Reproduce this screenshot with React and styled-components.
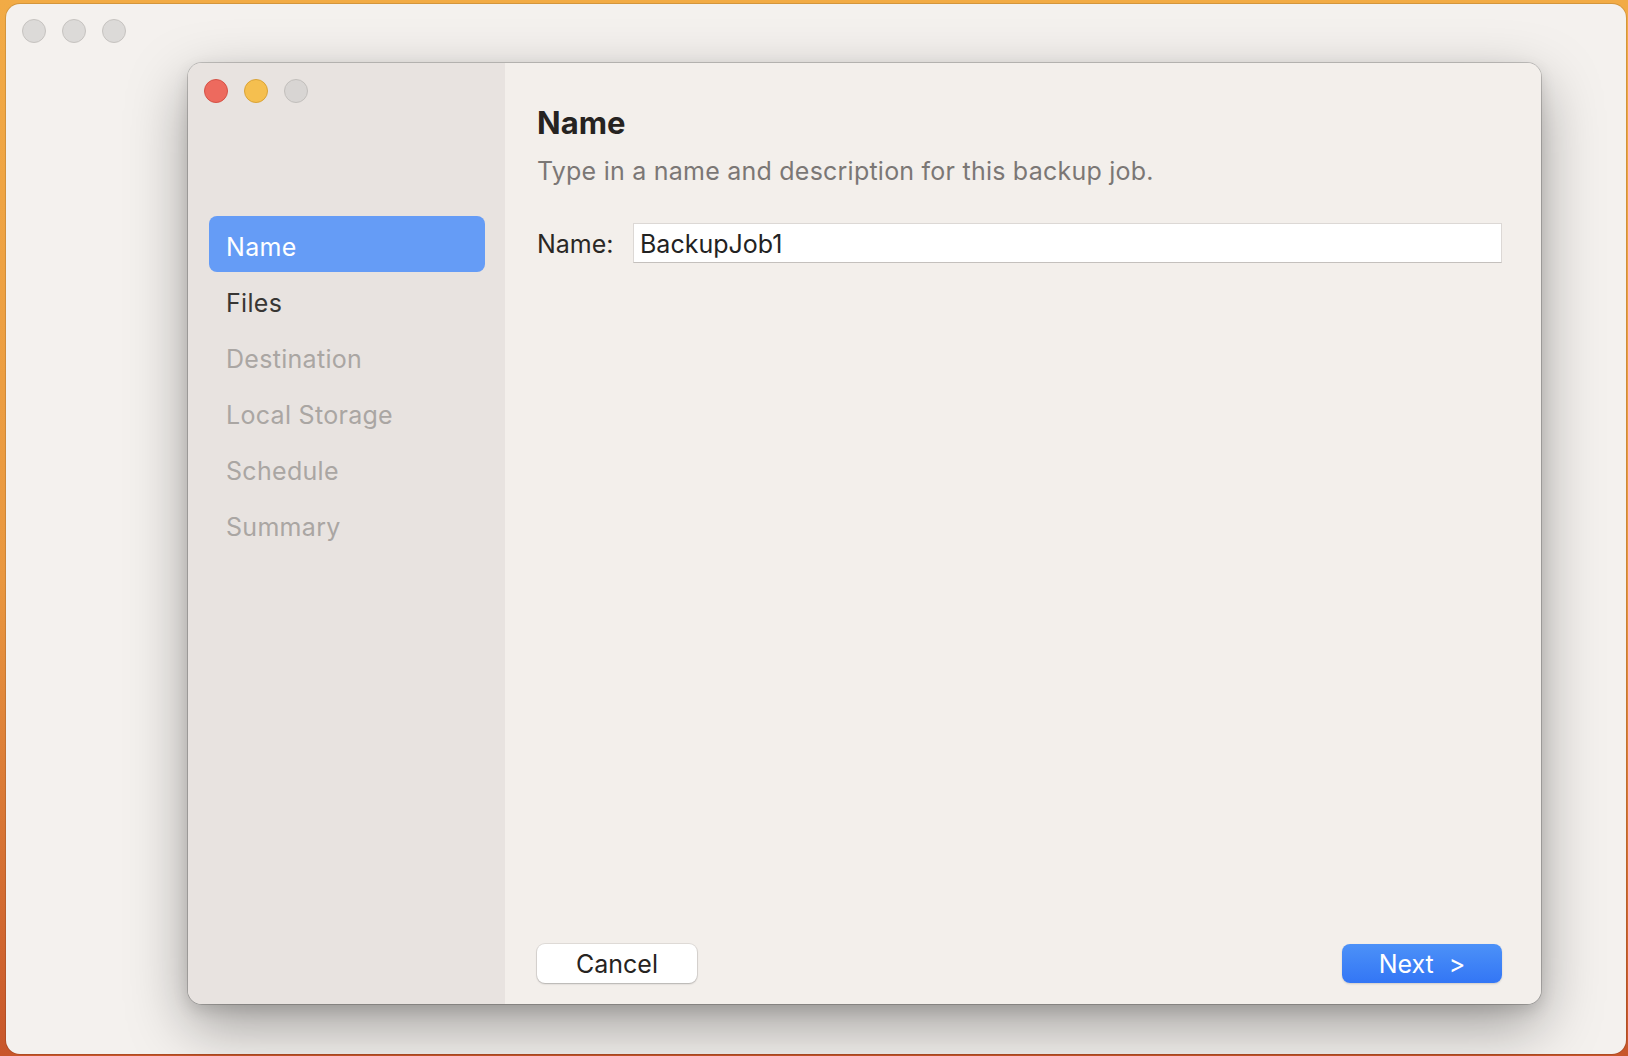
import styled, { createGlobalStyle } from "styled-components";

const GlobalStyle = createGlobalStyle`
  html, body {
    margin: 0;
    padding: 0;
    height: 1056px;
    overflow: hidden;
  }
  body {
    font-family: Inter, "Noto Sans", "Liberation Sans", sans-serif;
    background: linear-gradient(180deg, #f2ab45 0%, #e9973f 55%, #c8562a 100%);
  }
`;

const Desktop = styled.div`
  height: 1056px;
  padding: 4px 2px 2px 6px;
  box-sizing: border-box;
`;

const OuterWindow = styled.div`
  height: 100%;
  background: #f4f1ee;
  border-radius: 14px;
  box-shadow: 0 0 0 1px rgba(0, 0, 0, 0.12);
  display: flex;
  flex-direction: column;
`;

const TitleBar = styled.div`
  height: 59px;
  display: flex;
  align-items: flex-start;
  gap: 16px;
  padding: 15px 0 0 16px;
  box-sizing: border-box;
`;

const Light = styled.span`
  width: 24px;
  height: 24px;
  border-radius: 50%;
  box-sizing: border-box;
  background: ${(p) => p.color};
  border: 1px solid ${(p) => p.edge};
`;

const Dialog = styled.div`
  margin-left: 182px;
  width: 1353px;
  height: 941px;
  display: flex;
  border-radius: 14px;
  overflow: hidden;
  box-shadow: 0 0 0 1px rgba(0, 0, 0, 0.18), 0 22px 60px rgba(0, 0, 0, 0.35),
    0 6px 16px rgba(0, 0, 0, 0.12);
`;

const Sidebar = styled.div`
  width: 317px;
  background: #e8e3e0;
  display: flex;
  flex-direction: column;
  padding: 16px 20px 0 21px;
  box-sizing: border-box;
`;

const Lights = styled.div`
  display: flex;
  gap: 16px;
  margin-left: -5px;
  margin-bottom: 113px;
`;

const NavItem = styled.div`
  height: 56px;
  display: flex;
  align-items: center;
  padding: 5px 0 0 17px;
  box-sizing: border-box;
  border-radius: 8px;
  font-size: 25px;
  letter-spacing: 0.3px;
  color: ${(p) => (p.active ? "#ffffff" : p.enabled ? "#383634" : "#aaa6a3")};
  background: ${(p) => (p.active ? "#659cf6" : "transparent")};
`;

const Main = styled.div`
  flex: 1;
  background: #f3efeb;
  display: flex;
  flex-direction: column;
  padding: 41px 39px 21px 32px;
  box-sizing: border-box;
`;

const Title = styled.h1`
  margin: 0;
  font-size: 31px;
  line-height: 38px;
  font-weight: 700;
  color: #262321;
`;

const Subtitle = styled.p`
  margin: 14px 0 0;
  font-size: 25px;
  line-height: 30px;
  letter-spacing: 0.23px;
  color: #7b7775;
`;

const FieldRow = styled.div`
  margin-top: 37px;
  display: flex;
  align-items: center;
`;

const Label = styled.label`
  width: 96px;
  font-size: 25px;
  padding-top: 2px;
  color: #2a2725;
`;

const Input = styled.input`
  flex: 1;
  height: 40px;
  box-sizing: border-box;
  border: 1px solid #dcd8d5;
  border-bottom-color: #c4c0bd;
  background: #ffffff;
  padding: 2px 6px 0;
  font-family: inherit;
  font-size: 25px;
  color: #222;
  outline: none;
`;

const Spacer = styled.div`
  flex: 1;
`;

const Footer = styled.div`
  display: flex;
  justify-content: space-between;
`;

const Button = styled.button`
  width: 160px;
  height: 39px;
  border-radius: 8px;
  font-family: inherit;
  font-size: 25px;
  border: none;
  cursor: default;
  color: ${(p) => (p.primary ? "#ffffff" : "#262321")};
  background: ${(p) =>
    p.primary ? "linear-gradient(180deg, #4c91f8 0%, #3376f5 100%)" : "#ffffff"};
  box-shadow: ${(p) =>
    p.primary
      ? "0 1px 2px rgba(0,0,0,0.15)"
      : "0 0 0 1px rgba(0,0,0,0.08), 0 1px 2px rgba(0,0,0,0.2)"};
  word-spacing: ${(p) => (p.primary ? "8px" : "0")};
`;

const steps = [
  { label: "Name", active: true, enabled: true },
  { label: "Files", enabled: true },
  { label: "Destination" },
  { label: "Local Storage" },
  { label: "Schedule" },
  { label: "Summary" },
];

const App = () => {
  return (
    <>
      <GlobalStyle />
      <Desktop>
        <OuterWindow>
          <TitleBar>
            <Light color="#dcdad8" edge="#c6c3c0" />
            <Light color="#dcdad8" edge="#c6c3c0" />
            <Light color="#dcdad8" edge="#c6c3c0" />
          </TitleBar>
          <Dialog>
            <Sidebar>
              <Lights>
                <Light color="#ed6a5e" edge="#d55246" />
                <Light color="#f5bf4f" edge="#d9a337" />
                <Light color="#d8d5d3" edge="#c2bfbc" />
              </Lights>
              {steps.map((s) => (
                <NavItem key={s.label} active={s.active} enabled={s.enabled}>
                  {s.label}
                </NavItem>
              ))}
            </Sidebar>
            <Main>
              <Title>Name</Title>
              <Subtitle>Type in a name and description for this backup job.</Subtitle>
              <FieldRow>
                <Label htmlFor="jobName">Name:</Label>
                <Input id="jobName" defaultValue="BackupJob1" />
              </FieldRow>
              <Spacer />
              <Footer>
                <Button type="button">Cancel</Button>
                <Button type="button" primary>
                  Next &gt;
                </Button>
              </Footer>
            </Main>
          </Dialog>
        </OuterWindow>
      </Desktop>
    </>
  );
};

export default App;
